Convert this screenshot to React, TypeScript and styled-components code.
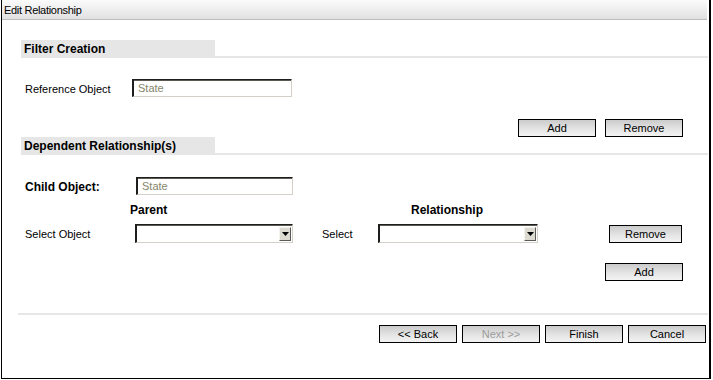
import React from "react";
import styled, { createGlobalStyle } from "styled-components";

const GlobalStyle = createGlobalStyle`
  html, body {
    margin: 0;
    padding: 0;
    background: #ffffff;
  }
  body {
    font-family: "Liberation Sans", Arial, sans-serif;
    font-size: 11px;
    color: #000;
  }
`;

const Frame = styled.div`
  box-sizing: border-box;
  width: 710px;
  height: 379px;
  margin-left: 1px;
  border-left: 1px solid #000;
  border-right: 2px solid #000;
  border-bottom: 1px solid #000;
  display: flex;
  flex-direction: column;
`;

const TitleBar = styled.div`
  height: 19px;
  margin-right: 2px;
  padding-left: 2px;
  display: flex;
  align-items: center;
  background: linear-gradient(to bottom, #fbfbfb, #e1e1e1);
  border-bottom: 1px solid #bdbdbd;
  font-size: 11px;
  letter-spacing: -0.3px;
`;

const Body = styled.div`
  padding: 0 1px 0 19px;
  display: flex;
  flex-direction: column;
`;

const SectionHeader = styled.div<{ $top: number }>`
  margin-top: ${(p) => p.$top}px;
  border-bottom: 2px solid #e6e6e6;
  display: flex;
`;

const HeaderTab = styled.div`
  width: 194px;
  height: 16px;
  padding-left: 3px;
  box-sizing: border-box;
  background: #e6e6e6;
  display: flex;
  align-items: center;
  font-size: 12px;
  font-weight: bold;
  padding-top: 1px;
`;

const FieldRow = styled.div<{ $top: number }>`
  margin-top: ${(p) => p.$top}px;
  padding-left: 4px;
  display: flex;
  align-items: center;
`;

const FieldLabel = styled.span<{ $width: number; $bold?: boolean }>`
  width: ${(p) => p.$width}px;
  flex-shrink: 0;
  font-size: ${(p) => (p.$bold ? 12 : 11)}px;
  font-weight: ${(p) => (p.$bold ? "bold" : "normal")};
  padding-top: 2px;
`;

const TextBox = styled.div<{ $width: number }>`
  box-sizing: border-box;
  width: ${(p) => p.$width}px;
  height: 18px;
  border-style: solid;
  border-width: 1px 1px 1px 2px;
  border-color: #1e1e1e #d4d0c8 #d4d0c8 #1e1e1e;
  box-shadow: inset 0 1px 0 #5c5a50;
  background: #fff;
  color: #85856a;
  padding-left: 4px;
  display: flex;
  align-items: center;
  font-size: 11px;
`;

const ButtonRow = styled.div<{ $top: number; $gap?: number; $right?: number }>`
  margin-top: ${(p) => p.$top}px;
  padding-right: ${(p) => p.$right ?? 25}px;
  display: flex;
  justify-content: flex-end;
  gap: ${(p) => p.$gap ?? 9}px;
`;

const Button = styled.button<{ $width?: number; $disabled?: boolean }>`
  box-sizing: border-box;
  width: ${(p) => p.$width ?? 78}px;
  height: 18px;
  padding: 0;
  border: 1px solid #000;
  background: linear-gradient(to bottom, #cbcbcb 0%, #e4e4e4 55%, #f3f3f3 100%);
  font-family: "Liberation Sans", Arial, sans-serif;
  font-size: 11px;
  color: ${(p) => (p.$disabled ? "#9c9c9c" : "#000")};
  display: flex;
  align-items: center;
  justify-content: center;
  cursor: pointer;
`;

const DependentGrid = styled.div`
  padding: 0 26px 0 3px;
  display: grid;
  grid-template-columns: 111px 158px 28px 57px 160px 1fr;
  align-items: center;
`;

const ColumnHeading = styled.span<{ $col: number; $shift: number }>`
  grid-column: ${(p) => p.$col};
  margin-left: ${(p) => p.$shift}px;
  margin-top: 8px;
  font-size: 12px;
  font-weight: bold;
  line-height: 14px;
  white-space: nowrap;
`;

const GridLabel = styled.span<{ $col: number }>`
  grid-column: ${(p) => p.$col};
  margin-top: 6px;
  padding-left: 1px;
  padding-top: 2px;
  font-size: 11px;
`;

const SelectBox = styled.div<{ $col: number }>`
  grid-column: ${(p) => p.$col};
  margin-top: 6px;
  box-sizing: border-box;
  height: 19px;
  border-style: solid;
  border-width: 1px 1px 1px 2px;
  border-color: #1e1e1e #d4d0c8 #d4d0c8 #1e1e1e;
  box-shadow: inset 0 1px 0 #5c5a50;
  background: #fff;
  display: flex;
  justify-content: flex-end;
  align-items: stretch;
  padding: 2px 1px 1px 0;
`;

const SelectArrow = styled.div`
  box-sizing: border-box;
  width: 12px;
  background: #dcd9d0;
  border-style: solid;
  border-width: 1px;
  border-color: #f4f3ee #5a5a5a #5a5a5a #f4f3ee;
  display: flex;
  align-items: center;
  justify-content: center;
`;

const RowButtonCell = styled.div`
  grid-column: 6;
  margin-top: 8px;
  display: flex;
  justify-content: flex-end;
`;

const Separator = styled.div`
  margin: 32px 0 0 -3px;
  height: 2px;
  background: #e6e6e6;
`;

const Dropdown = ({ col }: { col: number }) => (
  <SelectBox $col={col}>
    <SelectArrow>
      <svg width="7" height="4" viewBox="0 0 7 4">
        <polygon points="0,0 7,0 3.5,4" fill="#000" />
      </svg>
    </SelectArrow>
  </SelectBox>
);

export default function App() {
  return (
    <>
      <GlobalStyle />
      <Frame>
        <TitleBar>Edit Relationship</TitleBar>
        <Body>
          <SectionHeader $top={20}>
            <HeaderTab>Filter Creation</HeaderTab>
          </SectionHeader>
          <FieldRow $top={21}>
            <FieldLabel $width={107}>Reference Object</FieldLabel>
            <TextBox $width={160}>State</TextBox>
          </FieldRow>
          <ButtonRow $top={22}>
            <Button>Add</Button>
            <Button>Remove</Button>
          </ButtonRow>

          <SectionHeader $top={0}>
            <HeaderTab>Dependent Relationship(s)</HeaderTab>
          </SectionHeader>
          <FieldRow $top={22}>
            <FieldLabel $width={111} $bold>
              Child Object:
            </FieldLabel>
            <TextBox $width={157}>State</TextBox>
          </FieldRow>
          <DependentGrid>
            <ColumnHeading $col={2} $shift={-5}>
              Parent
            </ColumnHeading>
            <ColumnHeading $col={5} $shift={33}>
              Relationship
            </ColumnHeading>
            <GridLabel $col={1}>Select Object</GridLabel>
            <Dropdown col={2} />
            <GridLabel $col={4}>Select</GridLabel>
            <Dropdown col={5} />
            <RowButtonCell>
              <Button $width={73}>Remove</Button>
            </RowButtonCell>
          </DependentGrid>
          <ButtonRow $top={20}>
            <Button>Add</Button>
          </ButtonRow>

          <Separator />
          <ButtonRow $top={10} $gap={5} $right={2}>
            <Button>&lt;&lt; Back</Button>
            <Button $disabled>Next &gt;&gt;</Button>
            <Button>Finish</Button>
            <Button>Cancel</Button>
          </ButtonRow>
        </Body>
      </Frame>
    </>
  );
}
